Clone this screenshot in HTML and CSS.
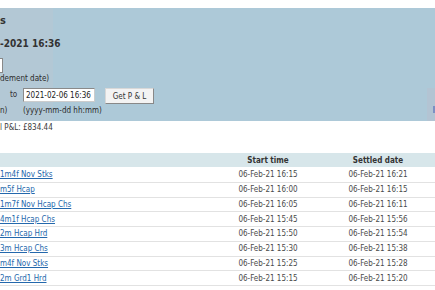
FILE: index.html
```html
<!DOCTYPE html>
<html lang="en">
<head>
  <meta charset="UTF-8">
  <meta name="viewport" content="width=device-width, initial-scale=1.0">
  <title>Profit and Loss</title>
  <link rel="stylesheet" href="styles.css">
</head>
<body>

  <div class="top-strip"></div>

  <!-- Search panel -->
  <div class="panel">
    <div class="panel-main">
      <h3 class="panel-heading">s</h3>
      <h2 class="panel-title">-2021 16:36</h2>
      <div class="stub-input"></div>
      <p class="hint hint-first">dement date)</p>

      <form class="range" onsubmit="return false">
        <label class="range-to" for="toDate">to</label>
        <input type="text" id="toDate" class="date-input" value="2021-02-06 16:36">
        <button type="submit" class="get-btn">Get P &amp; L</button>
        <span class="hint">n)</span>
        <span class="hint hint-format">(yyyy-mm-dd hh:mm)</span>
      </form>
    </div>
    <div class="edge-stub"><span class="edge-mark"></span></div>
  </div>

  <p class="total">l P&amp;L: £834.44</p>

  <!-- Settled markets -->
  <table class="results">
    <colgroup>
      <col class="col-name">
      <col class="col-time">
      <col class="col-time">
      <col>
    </colgroup>
    <thead>
      <tr>
        <th></th>
        <th>Start time</th>
        <th>Settled date</th>
        <th></th>
      </tr>
    </thead>
    <tbody>
      <tr><td class="name"><a href="#">1m4f Nov Stks</a></td><td>06-Feb-21 16:15</td><td>06-Feb-21 16:21</td><td></td></tr>
      <tr><td class="name"><a href="#">m5f Hcap</a></td><td>06-Feb-21 16:00</td><td>06-Feb-21 16:15</td><td></td></tr>
      <tr><td class="name"><a href="#">1m7f Nov Hcap Chs</a></td><td>06-Feb-21 16:05</td><td>06-Feb-21 16:11</td><td></td></tr>
      <tr><td class="name"><a href="#">4m1f Hcap Chs</a></td><td>06-Feb-21 15:45</td><td>06-Feb-21 15:56</td><td></td></tr>
      <tr><td class="name"><a href="#">2m Hcap Hrd</a></td><td>06-Feb-21 15:50</td><td>06-Feb-21 15:54</td><td></td></tr>
      <tr><td class="name"><a href="#">3m Hcap Chs</a></td><td>06-Feb-21 15:30</td><td>06-Feb-21 15:38</td><td></td></tr>
      <tr><td class="name"><a href="#">m4f Nov Stks</a></td><td>06-Feb-21 15:25</td><td>06-Feb-21 15:28</td><td></td></tr>
      <tr><td class="name"><a href="#">2m Grd1 Hrd</a></td><td>06-Feb-21 15:15</td><td>06-Feb-21 15:20</td><td></td></tr>
    </tbody>
  </table>

</body>
</html>
```

FILE: styles.css
```css
body {
  margin: 0;
  font-family: "DejaVu Sans Condensed", "DejaVu Sans", sans-serif;
  font-size: 8px;
  color: #333;
  background-color: #fff;
  overflow: hidden;
}

.top-strip {
  height: 8px;
}

.panel {
  display: flex;
  height: 113px;
  background: linear-gradient(to right, #b3c8d5 0, #b3c8d5 53px, #adc9d8 53px);
}

.panel-main {
  flex: 1;
  padding-top: 6px;
}

.panel-heading {
  margin: 0;
  font-size: 11px;
  line-height: 14px;
  font-weight: bold;
}

.panel-title {
  margin: 9px 0 0;
  font-size: 10px;
  line-height: 14px;
  font-weight: bold;
}

.stub-input {
  width: 2px;
  height: 13px;
  margin-top: 7px;
  background-color: #fff;
  border: 1px solid #888;
  border-left: none;
}

.hint {
  margin: 0;
  line-height: 10px;
  color: #2b2b2b;
}

.hint-first {
  margin-top: 1px;
}

.range {
  display: grid;
  grid-template-columns: 23px 82px auto;
  grid-template-rows: 16px 12px;
  align-items: start;
  margin-top: 4px;
}

.range-to {
  padding: 2px 0 0 10px;
  line-height: 10px;
}

.date-input {
  box-sizing: border-box;
  width: 72px;
  height: 14px;
  margin: 0;
  padding: 0 0 0 2px;
  font-family: inherit;
  font-size: 8px;
  color: #222;
  background-color: #fff;
  border: 1px solid #8a8a8a;
  border-right-color: #ccc;
  border-bottom-color: #ccc;
  outline: none;
}

.get-btn {
  width: 49px;
  height: 16px;
  padding: 0;
  font-family: inherit;
  font-size: 8px;
  color: #333;
  background-color: #f3f3f3;
  border: 1px solid #d8d8d8;
  border-right-color: #888;
  border-bottom-color: #888;
  cursor: pointer;
}

.hint-format {
  grid-column: 2 / 4;
  margin-top: 2px;
}

.range > .hint:not(.hint-format) {
  margin-top: 2px;
}

.edge-stub {
  align-self: flex-end;
  width: 8px;
  height: 33px;
  background-color: #b3c4d3;
}

.edge-mark {
  display: block;
  width: 2px;
  height: 7px;
  margin: 18px 0 0 6px;
  background-color: #7d90c2;
}

.total {
  margin: 2px 0 0;
  line-height: 10px;
  color: #3a3a3a;
}

.results {
  width: 435px;
  margin-top: 20px;
  table-layout: fixed;
  border-collapse: collapse;
}

.col-name {
  width: 213px;
}

.col-time {
  width: 110px;
}

.results th {
  height: 14px;
  padding: 0;
  font-weight: bold;
  color: #333;
  background-color: #d7e6ea;
  border-bottom: 1px solid #fff;
  text-align: center;
}

.results td {
  height: 13.75px;
  padding: 0;
  color: #4a4a4a;
  text-align: center;
  border-bottom: 1px solid #e2e2e2;
  white-space: nowrap;
}

.results td.name {
  text-align: left;
}

.results a {
  color: #2468ac;
  text-decoration: underline;
}
```
